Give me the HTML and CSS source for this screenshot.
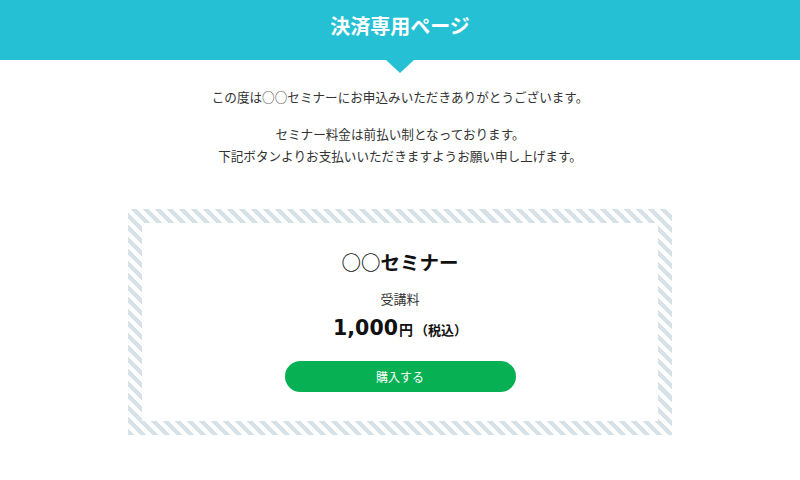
FILE: index.html
```html
<!DOCTYPE html>
<html lang="ja">
<head>
<meta charset="utf-8">
<title>決済専用ページ</title>
<link rel="stylesheet" href="styles.css">
</head>
<body>
<header class="header">
  <h1 class="header-title">決済専用ページ</h1>
</header>
<main class="main">
  <div class="intro">
    <p class="intro-p">この度は○○セミナーにお申込みいただきありがとうございます。</p>
    <p class="intro-p">セミナー料金は前払い制となっております。<br>下記ボタンよりお支払いいただきますようお願い申し上げます。</p>
  </div>
  <section class="card">
    <div class="card-inner">
      <h2 class="card-title">○○セミナー</h2>
      <p class="card-label">受講料</p>
      <p class="card-price"><span class="price-num">1,000</span><span class="price-yen">円</span><span class="price-tax">（税込）</span></p>
      <a class="buy-btn" href="#">購入する</a>
    </div>
  </section>
</main>
</body>
</html>
```

FILE: styles.css
```css
* { box-sizing: border-box; }
html, body { margin: 0; padding: 0; }
body {
  background: #fff;
  color: #333;
  font-family: "Noto Sans CJK JP", "Noto Sans", sans-serif;
  width: 800px;
  height: 480px;
  overflow: hidden;
}
.header {
  position: relative;
  height: 60px;
  background: #26c0d4;
  display: flex;
  align-items: center;
  justify-content: center;
}
.header::after {
  content: "";
  position: absolute;
  left: 50%;
  bottom: -13px;
  margin-left: -14px;
  border-left: 14px solid transparent;
  border-right: 14px solid transparent;
  border-top: 13px solid #26c0d4;
}
.header-title {
  margin: 0 0 8px;
  color: #fff;
  font-size: 20px;
  font-weight: 700;
  line-height: 1;
}
.main {
  display: flex;
  flex-direction: column;
  align-items: center;
}
.intro {
  margin-top: 26px;
  text-align: center;
  font-size: 12.6px;
  line-height: 22px;
  color: #333;
}
.intro-p { margin: 0; }
.intro-p + .intro-p { margin-top: 15px; }
.card {
  margin-top: 42px;
  width: 544px;
  padding: 14px;
  background: repeating-linear-gradient(45deg, #d6e2e8 0 4.25px, #fff 4.25px 8.5px);
}
.card-inner {
  background: #fff;
  height: 198px;
  padding-top: 24px;
  display: flex;
  flex-direction: column;
  align-items: center;
}
.card-title {
  margin: 0;
  height: 30px;
  font-size: 19.5px;
  line-height: 30px;
  font-weight: 700;
  color: #111;
}
.card-label {
  margin: 12px 0 0;
  height: 20px;
  font-size: 13px;
  line-height: 20px;
  color: #333;
}
.card-price {
  margin: 4px 0 0;
  height: 30px;
  line-height: 30px;
  font-weight: 700;
  color: #111;
  display: flex;
  align-items: baseline;
}
.price-num { font-size: 20.5px; font-family: "DejaVu Sans", sans-serif; }
.price-yen { font-size: 14px; margin-left: 1px; }
.price-tax { font-size: 13px; margin-left: 2px; }
.buy-btn {
  margin-top: 18px;
  width: 231px;
  height: 31px;
  border-radius: 16px;
  background: #07b153;
  color: #fff;
  font-size: 12px;
  text-decoration: none;
  display: flex;
  align-items: center;
  justify-content: center;
}
```
